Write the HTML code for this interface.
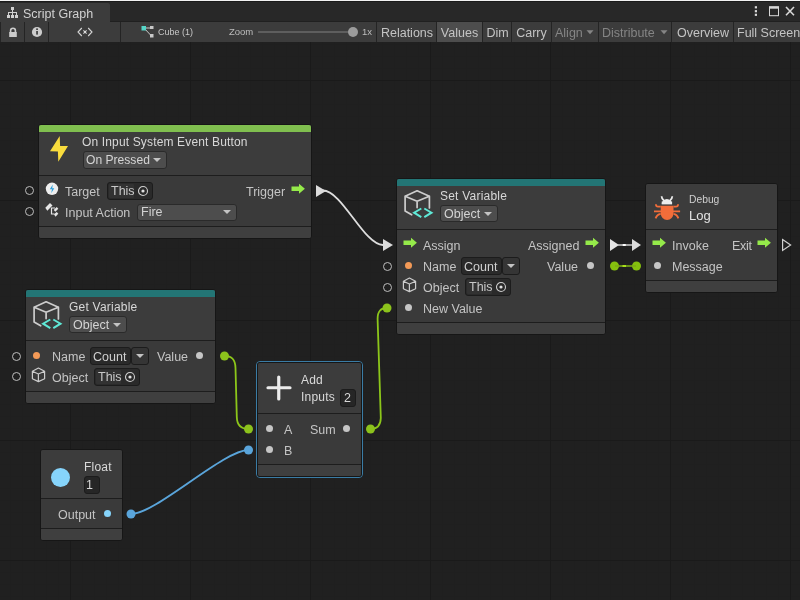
<!DOCTYPE html>
<html><head><meta charset="utf-8">
<style>
*{margin:0;padding:0;box-sizing:border-box}
html,body{width:800px;height:600px;overflow:hidden;-webkit-font-smoothing:antialiased;background:#202020;font-family:"Liberation Sans",sans-serif;color:#c4c4c4}
.a{position:absolute}
div{will-change:transform}
.t{position:absolute;white-space:nowrap;font-size:12.5px;line-height:14px;color:#c4c4c4}
.ti{position:absolute;white-space:nowrap;font-size:12px;line-height:14px;color:#d8d8d8;letter-spacing:0.22px}
.sep{position:absolute;top:22px;width:1px;height:20px;background:#242424}
.btn{position:absolute;top:22px;height:20px;font-size:12.5px;line-height:22px;text-align:center;color:#c4c4c4;white-space:nowrap}
.node{position:absolute;background:#3a3a3a;border:1px solid #161616;border-radius:3px;overflow:hidden}
.ph{position:absolute;width:9px;height:9px;border:1px solid #bdbdbd;border-radius:50%}
.dot{position:absolute;width:7.4px;height:7.4px;margin:0.3px;border-radius:50%;background:#c6c6c6}
.dd{position:absolute;background:#4d4d4d;border:1px solid #2a2a2a;border-radius:3px}
.fld{position:absolute;background:#2a2a2a;border:1px solid #1c1c1c;border-radius:3px}
.tri{position:absolute;width:0;height:0;border-left:4px solid transparent;border-right:4px solid transparent;border-top:4px solid #c4c4c4}
</style></head><body>

<svg class="a" style="left:0;top:0" width="800" height="600">
<defs>
<pattern id="minor" x="10" y="8" width="12" height="12" patternUnits="userSpaceOnUse">
<path d="M0 0.5H12M0.5 0V12" stroke="#1f1f1f" stroke-width="1" fill="none"/>
</pattern>
</defs>
<rect x="0" y="42" width="800" height="558" fill="url(#minor)"/>
<g stroke="#1a1a1a" stroke-width="1">
<path d="M70.5 42V600M190.5 42V600M310.5 42V600M430.5 42V600M550.5 42V600M670.5 42V600M790.5 42V600"/>
<path d="M0 80.5H800M0 200.5H800M0 320.5H800M0 440.5H800M0 560.5H800"/>
</g>
</svg>

<div class="a" style="left:0;top:0;width:800px;height:1px;background:#f2f2f2"></div>
<div class="a" style="left:0;top:1px;width:800px;height:1px;background:#1b1b1b"></div>
<div class="a" style="left:0;top:2px;width:800px;height:19px;background:#282828"></div>
<div class="a" style="left:0;top:21px;width:800px;height:1px;background:#202020"></div>
<div class="a" style="left:0;top:3px;width:110px;height:19px;background:#3c3c3c;border-radius:0 2px 0 0"></div>
<svg class="a" style="left:6px;top:6px" width="13" height="13" viewBox="0 0 13 13">
<g fill="#d0d0d0"><rect x="5" y="1" width="3" height="3"/><rect x="1" y="9" width="3" height="3"/><rect x="5" y="9" width="3" height="3"/><rect x="9" y="9" width="3" height="3"/>
<rect x="6" y="4" width="1" height="3"/><rect x="2" y="6" width="9" height="1"/><rect x="2" y="6" width="1" height="3"/><rect x="10" y="6" width="1" height="3"/><rect x="6" y="6" width="1" height="3"/></g>
</svg>
<div class="t" style="left:23px;top:6.7px;font-size:12.5px;color:#d2d2d2">Script Graph</div>
<svg class="a" style="left:750px;top:4px" width="50" height="16">
<g fill="#d8d8d8"><rect x="4.8" y="2.2" width="2.2" height="2.2"/><rect x="4.8" y="6.1" width="2.2" height="2.2"/><rect x="4.8" y="9.7" width="2.2" height="2.2"/></g>
<rect x="19.5" y="2.7" width="9" height="9" fill="none" stroke="#d8d8d8" stroke-width="1"/><rect x="19.5" y="2.7" width="9" height="2" fill="#d8d8d8"/>
<path d="M36 3L44 11.2M44 3L36 11.2" stroke="#d8d8d8" stroke-width="1.6"/>
</svg>
<div class="a" style="left:0;top:22px;width:800px;height:20px;background:#3c3c3c"></div>
<div class="sep" style="left:0"></div>
<div class="sep" style="left:24px"></div>
<div class="sep" style="left:48px"></div>
<div class="sep" style="left:120px"></div>
<div class="sep" style="left:376px"></div>
<svg class="a" style="left:8px;top:27px" width="10" height="11"><path d="M2.6 5.5V3.6a2.4 2.4 0 0 1 4.8 0V5.5" fill="none" stroke="#cccccc" stroke-width="1.6"/><rect x="1.2" y="5" width="7.6" height="5" fill="#cccccc"/></svg>
<svg class="a" style="left:31px;top:26px" width="12" height="12"><circle cx="6" cy="6" r="5.1" fill="#cccccc"/><rect x="5.2" y="5" width="1.7" height="3.6" fill="#3c3c3c"/><rect x="5.2" y="2.4" width="1.7" height="1.6" fill="#3c3c3c"/></svg>
<svg class="a" style="left:76px;top:26px" width="18" height="12"><path d="M5.8 2L2 6L5.8 10M12.2 2L16 6L12.2 10M7.4 4.4L10.6 7.6M10.6 4.4L7.4 7.6" fill="none" stroke="#d4d4d4" stroke-width="1.1"/><circle cx="9" cy="6" r="1" fill="#e0e0e0"/></svg>
<svg class="a" style="left:140px;top:25px" width="16" height="14"><g fill="#c8c8c8"><rect x="10" y="1" width="3.5" height="3"/><rect x="10" y="9" width="3.5" height="3.5"/></g><path d="M4 3H11M4 3L11 10.5" stroke="#c8c8c8" stroke-width="1"/><rect x="1.5" y="1" width="4.5" height="4.5" fill="#56d6c8"/></svg>
<div class="a" style="left:158px;top:26px;font-size:9px;line-height:12px;color:#c8c8c8">Cube (1)</div>
<div class="a" style="left:229px;top:26px;font-size:9.5px;line-height:12px;color:#bdbdbd">Zoom</div>
<div class="a" style="left:258px;top:31px;width:96px;height:2px;background:#5e5e5e"></div>
<div class="a" style="left:348px;top:27px;width:10px;height:10px;border-radius:50%;background:#9c9c9c"></div>
<div class="a" style="left:362px;top:26px;font-size:9.5px;line-height:12px;color:#bdbdbd">1x</div>
<div class="btn" style="left:377px;width:60px">Relations</div>
<div class="sep" style="left:436px"></div>
<div class="a" style="left:437px;top:22px;width:45px;height:20px;background:#4d4d4d"></div>
<div class="btn" style="left:437px;width:45px">Values</div>
<div class="sep" style="left:482px"></div>
<div class="btn" style="left:483px;width:29px">Dim</div>
<div class="sep" style="left:511px"></div>
<div class="btn" style="left:512px;width:39px">Carry</div>
<div class="sep" style="left:551px"></div>
<div class="btn" style="left:555px;color:#858585">Align</div>
<svg class="a" style="left:586px;top:30px" width="8" height="5"><path d="M0.5 0.3H7.5L4 4.3Z" fill="#858585"/></svg>
<div class="sep" style="left:598px"></div>
<div class="btn" style="left:602px;color:#858585">Distribute</div>
<svg class="a" style="left:659.5px;top:30px" width="8" height="5"><path d="M0.5 0.3H7.5L4 4.3Z" fill="#858585"/></svg>
<div class="sep" style="left:671px"></div>
<div class="btn" style="left:672px;width:62px">Overview</div>
<div class="sep" style="left:733px"></div>
<div class="btn" style="left:737px">Full Screen</div>

<svg class="a" style="left:0;top:0" width="800" height="600">
<path d="M323 190.5 C342 190.5 364 245 383 245" fill="none" stroke="#dedede" stroke-width="1.8"/>
<path d="M224.5 356 C231.5 356 235.3 359 235.5 368 L236.8 417 C237 425 241 429 248.5 429" fill="none" stroke="#8cc61a" stroke-width="1.8"/>
<path d="M370.5 429 C376.5 429 380.6 426 380.8 418 L377.6 319 C377.5 311 381 308 387 308" fill="none" stroke="#8cc61a" stroke-width="1.8"/>
<path d="M131 514 C156 514 223.5 450 248.5 450" fill="none" stroke="#5aa5db" stroke-width="2"/>
<circle cx="224.5" cy="356" r="4.5" fill="#8cc21c"/><circle cx="248.5" cy="429" r="4.5" fill="#8cc21c"/>
<circle cx="370.5" cy="429" r="4.5" fill="#8cc21c"/><circle cx="387" cy="308" r="4.5" fill="#8cc21c"/>
<circle cx="131" cy="514" r="4.5" fill="#5aa5db"/><circle cx="248.5" cy="450" r="4.5" fill="#5aa5db"/>
<path d="M316 185L326 191L316 197Z" fill="#dcdcdc"/>
<path d="M383 239L393 245L383 251Z" fill="#dcdcdc"/>
<path d="M610 239L619 245L610 251Z" fill="#e4e4e4"/><path d="M618 245H633" stroke="#c4c4c4" stroke-width="1.6"/><rect x="622.5" y="244" width="3.5" height="2" rx="1" fill="#ffffff"/>
<path d="M632 239L641 245L632 251Z" fill="#dcdcdc"/>
<circle cx="614.5" cy="266" r="4.5" fill="#85c00e"/><circle cx="636.5" cy="266" r="4.5" fill="#85c00e"/><path d="M615 266H636" stroke="#7cae14" stroke-width="1.6"/><rect x="622.5" y="265.2" width="3.5" height="1.6" fill="#b8f020"/>
<path d="M782.6 239.6L790.6 245L782.6 250.4Z" fill="none" stroke="#d0d0d0" stroke-width="1.2"/>
</svg>

<div class="node" style="left:38px;top:124px;width:274px;height:115px"><div class="a" style="left:0;top:0;right:0;height:50px;background:#3c3c3c"></div><div class="a" style="left:0;top:50px;right:0;height:1px;background:#1d1d1d"></div><div class="a" style="left:0;top:101px;right:0;height:1px;background:#1d1d1d"></div><div class="a" style="left:0;top:102px;right:0;bottom:0;background:#3f3f3f"></div><div class="a" style="left:0;top:0;right:0;height:7px;background:#80bf4f"></div></div>
<svg class="a" style="left:49px;top:135px" width="20" height="28"><path d="M10.7 1L1 16.3L8.9 16.6L9.3 26.8L19 11.1L11.1 10.9Z" fill="#f9dc3d"/></svg>
<div class="ti" style="left:82px;top:135px;letter-spacing:0.15px">On Input System Event Button</div>
<div class="dd" style="left:83px;top:151px;width:84px;height:17.5px"></div>
<div class="t" style="left:86px;top:153px;color:#d4d4d4;font-size:12.1px">On Pressed</div>
<div class="tri" style="left:153px;top:158px"></div>
<div class="ph" style="left:25px;top:186px"></div><div class="ph" style="left:25px;top:207px"></div>
<svg class="a" style="left:45px;top:182px" width="14" height="14"><circle cx="7" cy="6.8" r="6.2" fill="#eeeeee"/><path d="M7.8 2.5L4.8 7.2H7L6.2 11.2L9.3 6.3H7.2Z" fill="#2ea0dc"/></svg>
<svg class="a" style="left:42px;top:200px" width="20" height="20"><g fill="#e6e6e6"><path d="M3.3 7.8L8 3L10.5 5.5L5.3 10.7Z"/><path d="M11.7 10L14.7 7L16.3 8.7L13.3 11.7Z"/><path d="M12 14.3L14.7 12L16.3 13.7L13.5 16.7Z"/></g><path d="M9.5 7.5V14H12.5M9.5 8H13" stroke="#e6e6e6" stroke-width="1.2" fill="none"/></svg>
<div class="t" style="left:65px;top:185px">Target</div>
<div class="fld" style="left:107px;top:182px;width:46px;height:18px"></div><div class="a" style="left:109px;top:184px;width:25px;height:14px;background:#323232;border-radius:1px"></div>
<div class="t" style="left:111px;top:184px;color:#c8c8c8">This</div>
<svg class="a" style="left:137px;top:185px" width="12" height="12"><circle cx="6" cy="6" r="4.5" fill="none" stroke="#cfcfcf" stroke-width="1.1"/><circle cx="6" cy="6" r="1.6" fill="#e0e0e0"/></svg>
<div class="t" style="left:65px;top:206px">Input Action</div>
<div class="dd" style="left:137px;top:204px;width:100px;height:17px"></div>
<div class="t" style="left:141px;top:205px;color:#d2d2d2">Fire</div>
<div class="tri" style="left:223px;top:210px"></div>
<div class="t" style="left:246px;top:185px">Trigger</div>
<svg class="a" style="left:290px;top:183px" width="16" height="12"><path d="M1.5 3.4H9V0.7L14.9 5.7L9 10.7V7.9H1.5Z" fill="#95ea4a"/></svg>
<div class="node" style="left:396px;top:178px;width:210px;height:157px"><div class="a" style="left:0;top:0;right:0;height:50px;background:#3c3c3c"></div><div class="a" style="left:0;top:50px;right:0;height:1px;background:#1d1d1d"></div><div class="a" style="left:0;top:143px;right:0;height:1px;background:#1d1d1d"></div><div class="a" style="left:0;top:144px;right:0;bottom:0;background:#3f3f3f"></div><div class="a" style="left:0;top:0;right:0;height:7px;background:#237575"></div></div>
<svg class="a" style="left:400px;top:186px" width="36" height="36"><path d="M11.7 28.8L5.1 24.9V10.2L17.1 4.8L29.4 10.2V21.9M5.1 10.2L17.1 15.3L29.4 10.2M17.1 15.3V21.6" fill="none" stroke="#cdcdcd" stroke-width="1.7" stroke-linejoin="round" stroke-linecap="round"/>
<path d="M21.3 22.5L14.1 26.7L21.3 31.2M24.3 22.5L31.5 26.7L24.3 31.2" fill="none" stroke="#5fe8d6" stroke-width="2"/></svg>
<div class="ti" style="left:440px;top:189px">Set Variable</div>
<div class="dd" style="left:440px;top:205px;width:58px;height:17px"></div>
<div class="t" style="left:444px;top:206.5px;color:#d4d4d4">Object</div>
<div class="tri" style="left:484px;top:212px"></div>
<svg class="a" style="left:402px;top:237px" width="16" height="12"><path d="M1.5 3.4H9V0.7L14.9 5.7L9 10.7V7.9H1.5Z" fill="#95ea4a"/></svg>
<div class="t" style="left:423px;top:239px">Assign</div>
<div class="t" style="left:528px;top:239px">Assigned</div>
<svg class="a" style="left:584px;top:237px" width="16" height="12"><path d="M1.5 3.4H9V0.7L14.9 5.7L9 10.7V7.9H1.5Z" fill="#95ea4a"/></svg>
<div class="dot" style="left:405px;top:262px;background:#f39a57"></div>
<div class="t" style="left:423px;top:260px">Name</div>
<div class="fld" style="left:461px;top:257px;width:41px;height:18px"></div><div class="fld" style="left:502px;top:257px;width:18px;height:18px;background:#353535"></div>

<div class="t" style="left:464px;top:260px;color:#d0d0d0">Count</div>
<div class="tri" style="left:507px;top:264px"></div>
<div class="t" style="left:547px;top:260px">Value</div>
<div class="dot" style="left:587px;top:262px"></div>
<div class="ph" style="left:383px;top:262px"></div><div class="ph" style="left:383px;top:283px"></div>
<svg class="a" style="left:398px;top:274px" width="24" height="24"><path d="M11.4 4L17.6 7.2V14.8L11.4 17.6L5.4 14.8V7.2ZM5.4 7.2L11.4 10L17.6 7.2M11.4 10V17.6" fill="none" stroke="#cccccc" stroke-width="1.2" stroke-linejoin="round"/></svg>
<div class="t" style="left:423px;top:281px">Object</div>
<div class="fld" style="left:465px;top:278px;width:46px;height:18px"></div><div class="a" style="left:467px;top:280px;width:25px;height:14px;background:#323232;border-radius:1px"></div>
<div class="t" style="left:469px;top:280px;color:#c8c8c8">This</div>
<svg class="a" style="left:495px;top:281px" width="12" height="12"><circle cx="6" cy="6" r="4.5" fill="none" stroke="#cfcfcf" stroke-width="1.1"/><circle cx="6" cy="6" r="1.6" fill="#e0e0e0"/></svg>
<div class="dot" style="left:405px;top:304px"></div>
<div class="t" style="left:423px;top:302px">New Value</div>
<div class="node" style="left:645px;top:183px;width:133px;height:110px"><div class="a" style="left:0;top:0;right:0;height:45px;background:#3c3c3c"></div><div class="a" style="left:0;top:45px;right:0;height:1px;background:#1d1d1d"></div><div class="a" style="left:0;top:96px;right:0;height:1px;background:#1d1d1d"></div><div class="a" style="left:0;top:97px;right:0;bottom:0;background:#3f3f3f"></div></div>
<svg class="a" style="left:650px;top:192px" width="36" height="32" viewBox="0 0 36 32">
<path d="M11.7 12.2A5.2 5.3 0 0 1 22.1 12.2Z" fill="#ececec"/><rect x="11.7" y="9.5" width="10.4" height="2.7" fill="#ececec"/>
<path d="M11.6 4.3Q11.8 7.5 14 8.6M22.3 4.3Q22.1 7.5 19.9 8.6" fill="none" stroke="#ececec" stroke-width="1.8"/>
<path d="M10.7 13.7H23.5V21A6.4 7 0 0 1 10.7 21Z" fill="#f26d3a"/>
<path d="M10.7 14.7H8Q6 14.7 5.9 12.3M23.5 14.7H26Q28 14.7 28.1 12.3M4 19.3H30.1M10.7 21.9Q7 22.5 5.6 26.4M23.5 21.9Q27 22.5 28.4 26.4" fill="none" stroke="#f26d3a" stroke-width="1.8"/>
</svg>
<div class="a" style="left:689px;top:194px;font-size:10.3px;line-height:12px;color:#cfcfcf">Debug</div>
<div class="a" style="left:689px;top:208px;font-size:13px;line-height:15px;color:#e2e2e2">Log</div>
<svg class="a" style="left:651px;top:237px" width="16" height="12"><path d="M1.5 3.4H9V0.7L14.9 5.7L9 10.7V7.9H1.5Z" fill="#95ea4a"/></svg>
<div class="t" style="left:672px;top:239px">Invoke</div>
<div class="t" style="left:732px;top:239px;letter-spacing:-0.3px">Exit</div>
<svg class="a" style="left:756px;top:237px" width="16" height="12"><path d="M1.5 3.4H9V0.7L14.9 5.7L9 10.7V7.9H1.5Z" fill="#95ea4a"/></svg>
<div class="dot" style="left:654px;top:262px"></div>
<div class="t" style="left:672px;top:260px">Message</div>
<div class="node" style="left:25px;top:289px;width:191px;height:115px"><div class="a" style="left:0;top:0;right:0;height:50px;background:#3c3c3c"></div><div class="a" style="left:0;top:50px;right:0;height:1px;background:#1d1d1d"></div><div class="a" style="left:0;top:101px;right:0;height:1px;background:#1d1d1d"></div><div class="a" style="left:0;top:102px;right:0;bottom:0;background:#3f3f3f"></div><div class="a" style="left:0;top:0;right:0;height:7px;background:#237575"></div></div>
<svg class="a" style="left:29px;top:297px" width="36" height="36"><path d="M11.7 28.8L5.1 24.9V10.2L17.1 4.8L29.4 10.2V21.9M5.1 10.2L17.1 15.3L29.4 10.2M17.1 15.3V21.6" fill="none" stroke="#cdcdcd" stroke-width="1.7" stroke-linejoin="round" stroke-linecap="round"/>
<path d="M21.3 22.5L14.1 26.7L21.3 31.2M24.3 22.5L31.5 26.7L24.3 31.2" fill="none" stroke="#5fe8d6" stroke-width="2"/></svg>
<div class="ti" style="left:69px;top:300px">Get Variable</div>
<div class="dd" style="left:69px;top:316px;width:58px;height:17px"></div>
<div class="t" style="left:73px;top:318px;color:#d4d4d4">Object</div>
<div class="tri" style="left:113px;top:323px"></div>
<div class="ph" style="left:12px;top:352px"></div><div class="ph" style="left:12px;top:372px"></div>
<div class="dot" style="left:33px;top:352px;background:#f39a57"></div>
<div class="t" style="left:52px;top:350px">Name</div>
<div class="fld" style="left:90px;top:347px;width:41px;height:18px"></div><div class="fld" style="left:131px;top:347px;width:18px;height:18px;background:#353535"></div>

<div class="t" style="left:93px;top:350px;color:#d0d0d0">Count</div>
<div class="tri" style="left:136px;top:354px"></div>
<div class="t" style="left:157px;top:350px">Value</div>
<div class="dot" style="left:196px;top:352px"></div>
<svg class="a" style="left:27px;top:364px" width="24" height="24"><path d="M11.4 4L17.6 7.2V14.8L11.4 17.6L5.4 14.8V7.2ZM5.4 7.2L11.4 10L17.6 7.2M11.4 10V17.6" fill="none" stroke="#cccccc" stroke-width="1.2" stroke-linejoin="round"/></svg>
<div class="t" style="left:52px;top:371px">Object</div>
<div class="fld" style="left:94px;top:368px;width:46px;height:18px"></div><div class="a" style="left:96px;top:370px;width:25px;height:14px;background:#323232;border-radius:1px"></div>
<div class="t" style="left:98px;top:370px;color:#c8c8c8">This</div>
<svg class="a" style="left:124px;top:371px" width="12" height="12"><circle cx="6" cy="6" r="4.5" fill="none" stroke="#cfcfcf" stroke-width="1.1"/><circle cx="6" cy="6" r="1.6" fill="#e0e0e0"/></svg>
<div class="a" style="left:256px;top:361px;width:107px;height:117px;border:1px solid #3a7ca5;border-radius:4px"></div>
<div class="node" style="left:257px;top:362px;width:105px;height:115px"><div class="a" style="left:0;top:0;right:0;height:50px;background:#3c3c3c"></div><div class="a" style="left:0;top:50px;right:0;height:1px;background:#1d1d1d"></div><div class="a" style="left:0;top:101px;right:0;height:1px;background:#1d1d1d"></div><div class="a" style="left:0;top:102px;right:0;bottom:0;background:#3f3f3f"></div></div>
<svg class="a" style="left:266px;top:375px" width="26" height="26"><path d="M12.75 2V24M2 12.75H24" stroke="#ececec" stroke-width="3.2" stroke-linecap="round"/></svg>
<div class="ti" style="left:301px;top:373px;color:#dadada">Add</div>
<div class="ti" style="left:301px;top:390px;color:#dadada">Inputs</div>
<div class="fld" style="left:340px;top:389px;width:16px;height:18px;background:#262626"></div>
<div class="t" style="left:344px;top:391px;color:#d8d8d8">2</div>
<div class="dot" style="left:266px;top:425px"></div>
<div class="t" style="left:284px;top:423px">A</div>
<div class="t" style="left:310px;top:423px">Sum</div>
<div class="dot" style="left:343px;top:425px"></div>
<div class="dot" style="left:266px;top:446px"></div>
<div class="t" style="left:284px;top:444px">B</div>
<div class="node" style="left:40px;top:449px;width:83px;height:92px"><div class="a" style="left:0;top:0;right:0;height:48px;background:#3c3c3c"></div><div class="a" style="left:0;top:48px;right:0;height:1px;background:#1d1d1d"></div><div class="a" style="left:0;top:78px;right:0;height:1px;background:#1d1d1d"></div><div class="a" style="left:0;top:79px;right:0;bottom:0;background:#3f3f3f"></div></div>
<div class="a" style="left:50.5px;top:468px;width:19px;height:19px;border-radius:50%;background:#86d4fb"></div>
<div class="ti" style="left:84px;top:460px;color:#dadada">Float</div>
<div class="fld" style="left:84px;top:476px;width:16px;height:18px;background:#262626"></div>
<div class="t" style="left:85.5px;top:478px;color:#d8d8d8">1</div>
<div class="t" style="left:58px;top:508px">Output</div>
<div class="dot" style="left:104px;top:510px;background:#86d4fb"></div>
</body></html>
